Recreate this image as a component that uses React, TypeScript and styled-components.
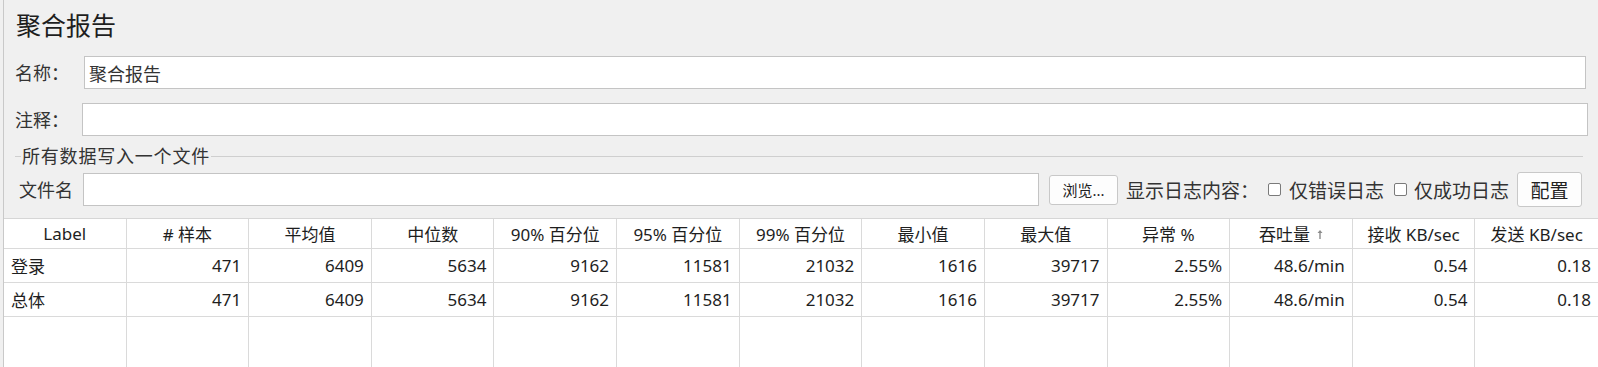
import styled, { createGlobalStyle } from "styled-components";

const GlobalStyle = createGlobalStyle`
  html, body {
    margin: 0;
    padding: 0;
    background: #f0f0f0;
  }
  body {
    font-family: "Noto Sans", "Noto Sans CJK SC", sans-serif;
    color: #222;
  }
`;

const Shell = styled.div`
  height: 100vh;
  margin-left: 3px;
  border-left: 1px solid #c9c9c9;
  display: flex;
  flex-direction: column;
  overflow: hidden;
`;

const Form = styled.div`
  padding: 8px 0 0 11px;
`;

const Title = styled.div`
  font-size: 25px;
  line-height: 34px;
  padding-left: 1px;
  color: #1e1e1e;
`;

const FieldRow = styled.div<{ $top: number; $right: number }>`
  display: flex;
  align-items: center;
  margin-top: ${(p) => p.$top}px;
  padding-right: ${(p) => p.$right}px;
`;

const FieldLabel = styled.label<{ $width: number; $indent?: number }>`
  flex-shrink: 0;
  width: ${(p) => p.$width}px;
  padding-left: ${(p) => p.$indent ?? 0}px;
  box-sizing: border-box;
  font-size: 18px;
  line-height: 24px;
  color: #333;
`;

const TextBox = styled.div`
  flex: 1;
  height: 33px;
  box-sizing: border-box;
  border: 1px solid #c4c4c4;
  background: #fff;
  font-size: 18px;
  color: #333;
  padding-left: 4px;
  display: flex;
  align-items: center;
`;

const GroupTitle = styled.div`
  display: flex;
  align-items: center;
  height: 20px;
  margin-top: 10px;
  padding-right: 15px;
`;

const GroupLine = styled.div<{ $grow?: boolean }>`
  height: 1px;
  background: #cfcfcf;
  width: 6px;
  flex: ${(p) => (p.$grow ? 1 : "none")};
`;

const GroupText = styled.span`
  font-size: 18px;
  line-height: 20px;
  color: #333;
  padding: 0 1px;
  letter-spacing: 0.8px;
`;

const FileRow = styled.div`
  display: flex;
  align-items: center;
  height: 35px;
  margin-top: 6px;
  padding-right: 16px;
`;

const Button = styled.button<{ $w: number; $h: number; $size: number; $gap: number }>`
  flex-shrink: 0;
  width: ${(p) => p.$w}px;
  height: ${(p) => p.$h}px;
  margin-left: ${(p) => p.$gap}px;
  padding: 0;
  border: 1px solid #c8c8c8;
  border-radius: 3px;
  background: #fdfdfd;
  font-family: inherit;
  font-size: ${(p) => p.$size}px;
  color: #222;
`;

const InlineText = styled.span<{ $gap: number }>`
  flex-shrink: 0;
  margin-left: ${(p) => p.$gap}px;
  font-size: 19px;
  color: #333;
  white-space: nowrap;
`;

const Check = styled.span<{ $gap: number }>`
  flex-shrink: 0;
  width: 13px;
  height: 13px;
  margin-left: ${(p) => p.$gap}px;
  border: 1px solid #7a7a7a;
  border-radius: 2px;
  background: #fff;
  box-sizing: border-box;
`;

const Grid = styled.div`
  flex: 1;
  margin-top: 11px;
  display: grid;
  grid-template-columns: repeat(13, 1fr);
  grid-template-rows: 30px 34px 34px 1fr;
  background: #fff;
  border-top: 1px solid #d6d6d6;
`;

const Cell = styled.div<{ $align: "left" | "center" | "right"; $last?: boolean; $fill?: boolean }>`
  display: flex;
  align-items: center;
  justify-content: ${(p) =>
    p.$align === "left" ? "flex-start" : p.$align === "right" ? "flex-end" : "center"};
  padding: 0 7px;
  box-sizing: border-box;
  border-right: ${(p) => (p.$last ? "none" : "1px solid #dadada")};
  border-bottom: ${(p) => (p.$fill ? "none" : "1px solid #dadada")};
  font-size: 17px;
  color: #1e1e1e;
  white-space: nowrap;
  overflow: hidden;
`;

const SortMark = styled.svg`
  margin-left: 7px;
  margin-top: 1px;
  flex-shrink: 0;
`;

const headers = [
  "Label",
  "# 样本",
  "平均值",
  "中位数",
  "90% 百分位",
  "95% 百分位",
  "99% 百分位",
  "最小值",
  "最大值",
  "异常 %",
  "吞吐量",
  "接收 KB/sec",
  "发送 KB/sec",
];

const rows = [
  ["登录", "471", "6409", "5634", "9162", "11581", "21032", "1616", "39717", "2.55%", "48.6/min", "0.54", "0.18"],
  ["总体", "471", "6409", "5634", "9162", "11581", "21032", "1616", "39717", "2.55%", "48.6/min", "0.54", "0.18"],
];

export default function App() {
  return (
    <>
      <GlobalStyle />
      <Shell>
        <Form>
          <Title>聚合报告</Title>
          <FieldRow $top={14} $right={12}>
            <FieldLabel $width={69}>名称：</FieldLabel>
            <TextBox>聚合报告</TextBox>
          </FieldRow>
          <FieldRow $top={14} $right={10}>
            <FieldLabel $width={67}>注释：</FieldLabel>
            <TextBox />
          </FieldRow>
          <GroupTitle>
            <GroupLine />
            <GroupText>所有数据写入一个文件</GroupText>
            <GroupLine $grow />
          </GroupTitle>
          <FileRow>
            <FieldLabel $width={68} $indent={4}>
              文件名
            </FieldLabel>
            <TextBox />
            <Button $w={69} $h={30} $size={15} $gap={10}>
              浏览...
            </Button>
            <InlineText $gap={8}>显示日志内容：</InlineText>
            <Check $gap={9} />
            <InlineText $gap={8}>仅错误日志</InlineText>
            <Check $gap={10} />
            <InlineText $gap={7}>仅成功日志</InlineText>
            <Button $w={65} $h={35} $size={19} $gap={8}>
              配置
            </Button>
          </FileRow>
        </Form>
        <Grid>
          {headers.map((h, i) => (
            <Cell key={h} $align="center" $last={i === 12}>
              {h}
              {h === "吞吐量" && (
                <SortMark width="6" height="10" viewBox="0 0 6 10">
                  <path d="M3 1 L0.5 4 H2.3 V10 H3.7 V4 H5.5 Z" fill="#8c8c8c" />
                </SortMark>
              )}
            </Cell>
          ))}
          {rows.map((r, ri) =>
            r.map((v, ci) => (
              <Cell key={`${ri}-${ci}`} $align={ci === 0 ? "left" : "right"} $last={ci === 12}>
                {v}
              </Cell>
            ))
          )}
          {headers.map((h, i) => (
            <Cell key={`f-${h}`} $align="center" $fill $last={i === 12} />
          ))}
        </Grid>
      </Shell>
    </>
  );
}
